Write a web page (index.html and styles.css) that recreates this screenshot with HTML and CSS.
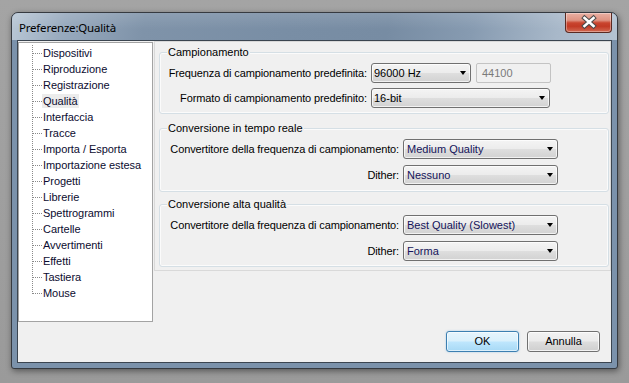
FILE: index.html
```html
<!DOCTYPE html>
<html lang="it">
<head>
<meta charset="utf-8">
<title>Preferenze:Qualità</title>
<link rel="stylesheet" href="styles.css">
</head>
<body>
<div class="window">
  <div class="titlebar">
    <span class="title">Preferenze:Qualità</span>
    <div class="close">
      <svg width="45" height="17" viewBox="0 0 45 17">
        <path d="M18.5 4 L27.5 12 M27.5 4 L18.5 12" stroke="#4a4a4a" stroke-width="4.6" stroke-linecap="square" fill="none"/>
        <path d="M18.5 4 L27.5 12 M27.5 4 L18.5 12" stroke="#ffffff" stroke-width="2.6" stroke-linecap="square" fill="none"/>
      </svg>
    </div>
  </div>
  <div class="client">
    <div class="main">
      <div class="tree">
        <ul>
          <li><span>Dispositivi</span></li>
          <li><span>Riproduzione</span></li>
          <li><span>Registrazione</span></li>
          <li><span class="sel">Qualità</span></li>
          <li><span>Interfaccia</span></li>
          <li><span>Tracce</span></li>
          <li><span>Importa / Esporta</span></li>
          <li><span>Importazione estesa</span></li>
          <li><span>Progetti</span></li>
          <li><span>Librerie</span></li>
          <li><span>Spettrogrammi</span></li>
          <li><span>Cartelle</span></li>
          <li><span>Avvertimenti</span></li>
          <li><span>Effetti</span></li>
          <li><span>Tastiera</span></li>
          <li class="last"><span>Mouse</span></li>
        </ul>
      </div>
      <div class="page">
        <div class="group g1">
          <div class="gtitle">Campionamento</div>
          <div class="grid grid1">
            <span class="lbl">Frequenza di campionamento predefinita:</span>
            <div class="ctrls">
              <div class="combo w99"><span>96000 Hz</span><i class="arrow"></i></div>
              <div class="field">44100</div>
            </div>
            <span class="lbl">Formato di campionamento predefinito:</span>
            <div class="combo w178"><span>16-bit</span><i class="arrow"></i></div>
          </div>
        </div>
        <div class="group g2">
          <div class="gtitle">Conversione in tempo reale</div>
          <div class="grid grid2">
            <span class="lbl">Convertitore della frequenza di campionamento:</span>
            <div class="combo w154 blue"><span>Medium Quality</span><i class="arrow"></i></div>
            <span class="lbl">Dither:</span>
            <div class="combo w154 blue"><span>Nessuno</span><i class="arrow"></i></div>
          </div>
        </div>
        <div class="group g3">
          <div class="gtitle">Conversione alta qualità</div>
          <div class="grid grid2">
            <span class="lbl">Convertitore della frequenza di campionamento:</span>
            <div class="combo w154 blue"><span>Best Quality (Slowest)</span><i class="arrow"></i></div>
            <span class="lbl">Dither:</span>
            <div class="combo w154 blue"><span>Forma</span><i class="arrow"></i></div>
          </div>
        </div>
      </div>
    </div>
    <div class="buttons">
      <div class="btn default">OK</div>
      <div class="btn">Annulla</div>
    </div>
  </div>
</div>
</body>
</html>
```
FILE: styles.css
```css
* { box-sizing: border-box; }
html, body { margin: 0; padding: 0; }
body {
  width: 629px;
  height: 383px;
  overflow: hidden;
  background: linear-gradient(to bottom, #a4a4a4 0%, #9a9a9a 100%);
  font-family: "Liberation Sans", Arial, sans-serif;
  font-size: 11px;
  color: #000;
}
.window {
  margin: 12px 0 0 11px;
  width: 607px;
  height: 357px;
  border: 1px solid #363a40;
  border-radius: 7px 7px 3px 3px;
  background: #7b92ab;
  padding: 0 5px 5px;
  display: flex;
  flex-direction: column;
  box-shadow: 1px 2px 6px rgba(0,0,0,0.45);
}
.titlebar {
  height: 27px;
  margin: 0 -5px;
  padding-left: 7px;
  display: flex;
  justify-content: space-between;
  border-radius: 6px 6px 0 0;
  background:
    linear-gradient(to bottom, rgba(255,255,255,0.12), rgba(255,255,255,0) 60%),
    linear-gradient(100deg, #b9c7d5 0%, #97a9bd 9%, #7f93a9 22%, #798ea5 45%, #778ca3 62%, #879bb1 76%, #a8b8c9 90%, #b4c3d2 100%);
}
.title {
  font-family: "Noto Sans", "Open Sans", sans-serif;
  font-size: 11.5px;
  letter-spacing: -0.2px;
  line-height: 27px;
  padding-top: 1px;
  color: #000;
}
.close {
  width: 47px;
  height: 20px;
  margin-right: 5px;
  border: 1px solid #5a2a22;
  border-top: none;
  border-radius: 0 0 4px 4px;
  background: linear-gradient(to bottom, #eab0a3 0%, #df9382 38%, #c9452f 52%, #c23a25 70%, #d26a53 100%);
  box-shadow: inset 0 0 0 1px rgba(255,255,255,0.35);
  display: flex;
  align-items: center;
  justify-content: center;
}
.close svg { display: block; }
.client {
  flex: 1;
  background: #f0f0f0;
  border: 1px solid #3b4550;
  display: flex;
  flex-direction: column;
}
.main {
  display: flex;
  height: 281px;
}
.tree {
  margin-top: 1px;
  width: 135px;
  height: 280px;
  background: #fff;
  border: 1px solid #a3a3a3;
}
.tree ul {
  list-style: none;
  margin: 0 0 0 13px;
  padding: 2px 0 0;
}
.tree li {
  height: 16px;
  line-height: 16px;
  padding-left: 11px;
  color: #0c0c30;
  white-space: nowrap;
  letter-spacing: -0.05px;
  background-image:
    repeating-linear-gradient(to right, #8a8a8a 0 1px, transparent 1px 2px),
    repeating-linear-gradient(to bottom, #8a8a8a 0 1px, transparent 1px 2px);
  background-size: 9px 1px, 1px 100%;
  background-position: 1px 8px, 0 0;
  background-repeat: no-repeat;
}
.tree li.last {
  background-size: 9px 1px, 1px 9px;
}
.tree .sel {
  background: #ececec;
  padding: 1px 1px;
  margin-left: -1px;
}
.page {
  margin-left: 1px;
  flex: 1;
  height: 230px;
  border: 1px solid #d9d9d9;
  padding: 0 1px 0 4px;
}
.group {
  border: 1px solid #d5dfe5;
  border-radius: 3px;
  box-shadow: inset 0 0 0 1px #fbfbfb;
}
.g1 { margin-top: 10px; padding-bottom: 5px; }
.g2 { margin-top: 14px; padding-bottom: 6px; }
.g3 { margin-top: 12px; padding-bottom: 5px; }
.gtitle {
  margin: -7px 0 0 7px;
  padding: 0 1px;
  width: max-content;
  background: #f0f0f0;
  line-height: 13px;
  height: 13px;
}
.grid {
  margin-top: 4px;
  display: grid;
  align-items: center;
}
.grid1 {
  padding-left: 7px;
  grid-template-columns: 200px auto;
  column-gap: 4px;
  row-gap: 5px;
}
.grid2 {
  padding-left: 5px;
  grid-template-columns: 234px auto;
  column-gap: 4px;
  row-gap: 6px;
}
.lbl {
  text-align: right;
  white-space: nowrap;
  line-height: 20px;
  letter-spacing: -0.12px;
}
.ctrls {
  display: flex;
  gap: 5px;
}
.combo {
  height: 20px;
  border: 1px solid #707070;
  border-radius: 3px;
  background: linear-gradient(to bottom, #f4f4f4 0%, #ececec 48%, #dedede 52%, #d2d2d2 100%);
  box-shadow: inset 0 0 0 1px rgba(255,255,255,0.7);
  display: flex;
  align-items: center;
  justify-content: space-between;
  padding-left: 2px;
  white-space: nowrap;
}
.combo.blue {
  color: #14145a;
  padding-left: 3px;
}
.w99 { width: 100px; }
.w178 { width: 179px; }
.w154 { width: 155px; }
.arrow {
  width: 0;
  height: 0;
  border-left: 3.5px solid transparent;
  border-right: 3.5px solid transparent;
  border-top: 4px solid #000;
  margin-right: 4px;
}
.field {
  width: 75px;
  height: 20px;
  border: 1px solid #c3c3c3;
  border-radius: 2px;
  background: #f0f0f0;
  color: #7a7a7a;
  padding-left: 5px;
  line-height: 18px;
}
.buttons {
  margin-top: 9px;
  padding-right: 11px;
  display: flex;
  justify-content: flex-end;
  gap: 8px;
}
.btn {
  width: 73px;
  height: 21px;
  border: 1px solid #707070;
  border-radius: 3px;
  background: linear-gradient(to bottom, #f2f2f2 0%, #ebebeb 48%, #dddddd 52%, #cfcfcf 100%);
  box-shadow: inset 0 0 0 1px rgba(255,255,255,0.75);
  text-align: center;
  line-height: 19px;
}
.btn.default {
  border-color: #3c7fb1;
  background: linear-gradient(to bottom, #e6f5fd 0%, #d9f0fc 48%, #bee6fd 52%, #a7d9f5 100%);
  box-shadow: inset 0 0 0 1px rgba(255,255,255,0.6), 0 0 2px rgba(80,160,220,0.5);
}
```
